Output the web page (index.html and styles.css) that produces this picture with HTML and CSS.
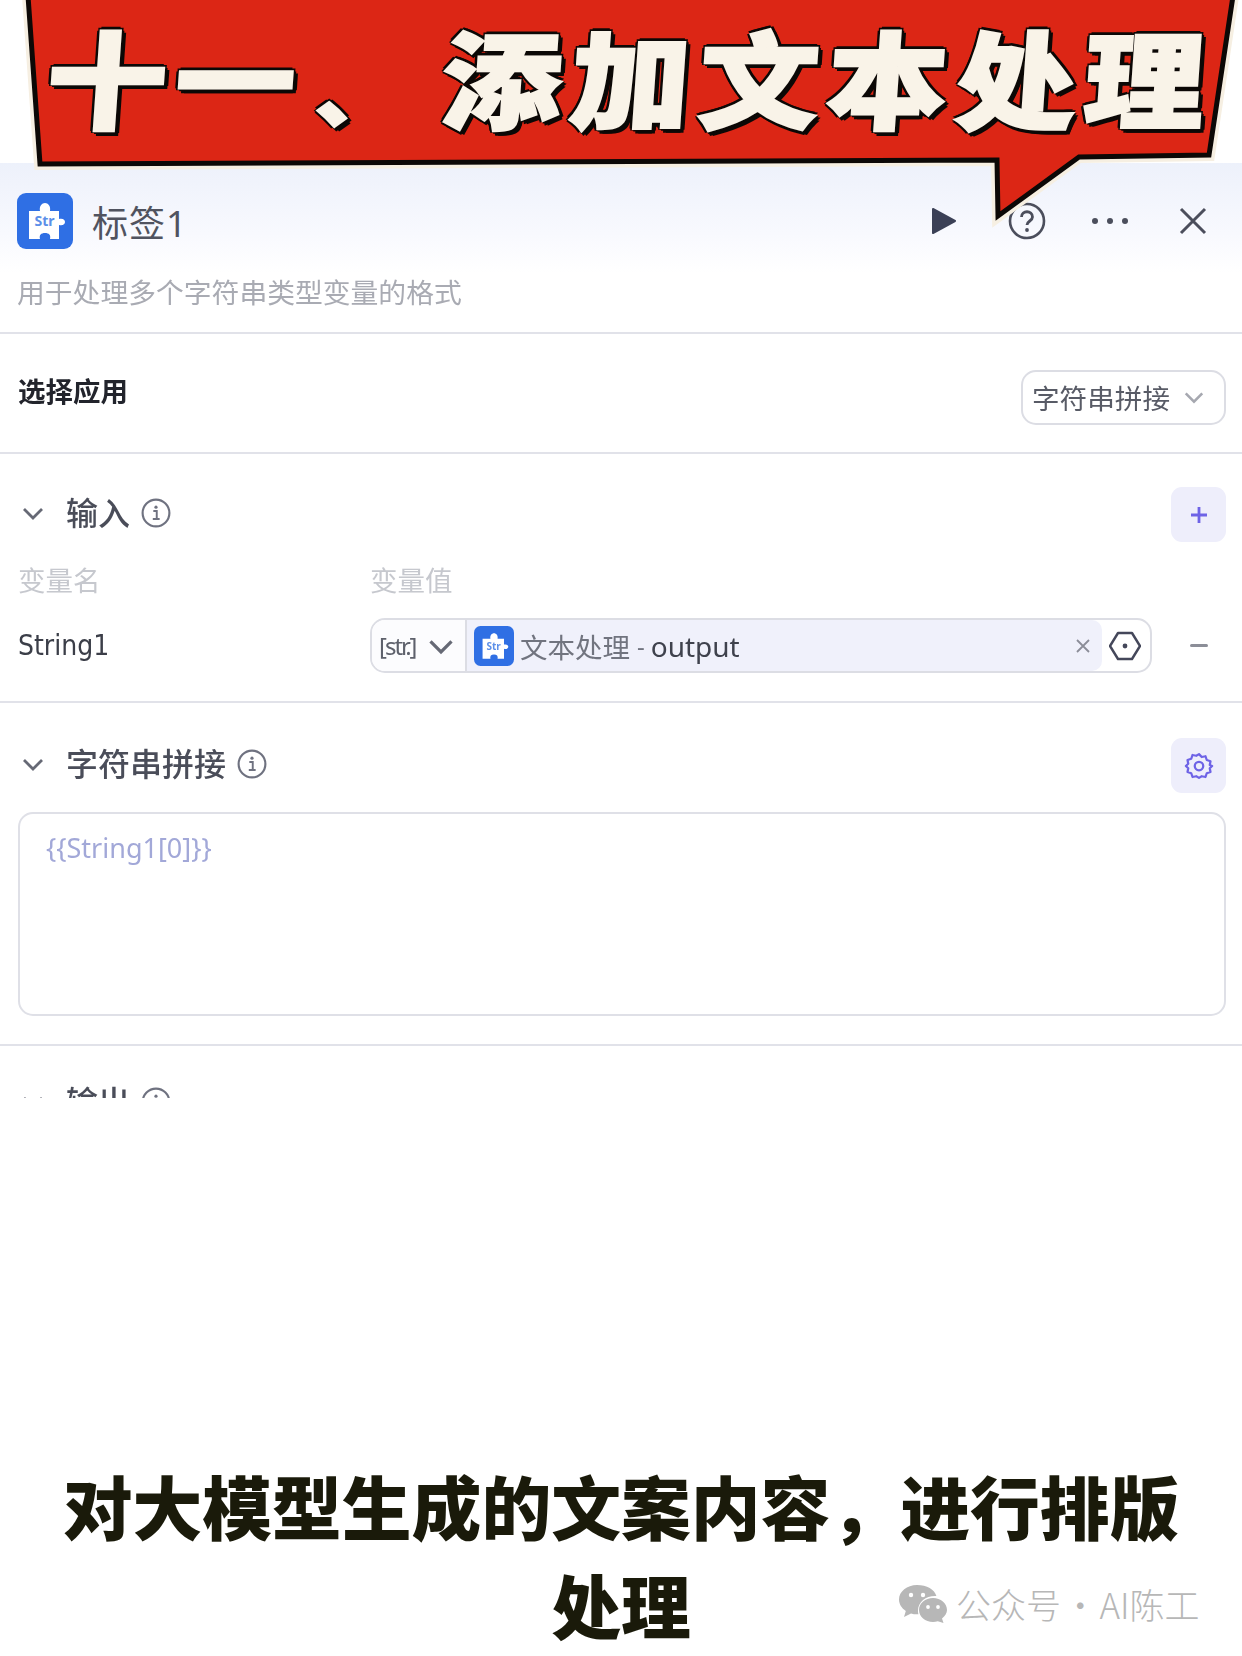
FILE: index.html
```html
<!DOCTYPE html>
<html lang="zh-CN">
<head>
<meta charset="utf-8">
<title>添加文本处理</title>
<link rel="stylesheet" href="styles.css">
</head>
<body>
<svg width="0" height="0" class="defs" aria-hidden="true">
  <symbol id="puzzle" viewBox="0 0 56 56">
    <rect width="56" height="56" rx="9" fill="#2f6fe4"/>
    <path d="M12 18h11c-1-5 2-8 5-8s6 3 5 8h9v8c4-1 6 1 6 3s-2 4-6 3v14h-9c1-4-1-6-5-6s-6 2-5 6H12z" fill="#fff"/>
    <text x="27.500" y="33" class="puzzle-text">Str</text>
  </symbol>
  <symbol id="info" viewBox="0 0 28 28">
    <circle cx="14" cy="14" r="12.500" fill="none" stroke="#6f7280" stroke-width="2"/>
    <circle cx="14" cy="8.600" r="1.500" fill="#6f7280"/>
    <path d="M11.500 12.200h3.200v7.200M11 19.600h6.400" fill="none" stroke="#6f7280" stroke-width="1.800"/>
  </symbol>
  <symbol id="chev" viewBox="0 0 24 24">
    <path d="M3 8l9 9 9-9" fill="none" stroke="currentColor" stroke-width="2.800"/>
  </symbol>
</svg>

<div class="banner">
  <svg class="banner-shape" width="1242" height="230" viewBox="0 0 1242 230" aria-hidden="true">
    <path class="banner-halo" d="M28 -4L40 164L997 160L998 216L1079 157L1209 155L1233 -4Z"/>
    <path class="banner-fill" d="M28 -4L40 164L997 160L998 216L1079 157L1209 155L1233 -4Z"/>
  </svg>
  <div class="banner-title">十一<span class="banner-mark">、</span>添加文本处理</div>
</div>

<main class="panel">
  <header class="head">
    <div class="head-row">
      <svg class="node-icon"><use href="#puzzle"/></svg>
      <h1 class="node-title">标签1</h1>
      <div class="actions">
        <span class="action"><svg width="26" height="28" viewBox="0 0 26 28"><path d="M2 2l22 12L2 26z" fill="#3b4056" stroke="#3b4056" stroke-width="2" stroke-linejoin="round"/></svg></span>
        <span class="action"><svg width="38" height="38" viewBox="0 0 38 38"><circle cx="19" cy="19" r="17" fill="none" stroke="#4b4e5c" stroke-width="2.600"/><path d="M13.500 15c0-7 11-7 11 0 0 4-5.500 4-5.500 8" fill="none" stroke="#4b4e5c" stroke-width="2.800"/><circle cx="19" cy="28" r="1.900" fill="#4b4e5c"/></svg></span>
        <span class="action"><svg width="38" height="8" viewBox="0 0 38 8"><circle cx="4" cy="4" r="3" fill="#4b4e5c"/><circle cx="19" cy="4" r="3" fill="#4b4e5c"/><circle cx="34" cy="4" r="3" fill="#4b4e5c"/></svg></span>
        <span class="action"><svg width="28" height="28" viewBox="0 0 28 28"><path d="M2 2l24 24M26 2L2 26" fill="none" stroke="#4b4e5c" stroke-width="3"/></svg></span>
      </div>
    </div>
    <p class="desc">用于处理多个字符串类型变量的格式</p>
  </header>

  <section class="section app">
    <div class="app-label">选择应用</div>
    <div class="select">
      <span>字符串拼接</span>
      <svg class="select-chev"><use href="#chev"/></svg>
    </div>
  </section>

  <section class="section inputs">
    <div class="sec-head">
      <svg class="sec-chev"><use href="#chev"/></svg>
      <span class="sec-title">输入</span>
      <svg class="info"><use href="#info"/></svg>
      <span class="sec-btn"><svg width="20" height="20" viewBox="0 0 20 20"><path d="M10 2v16M2 10h16" stroke="#6e63e6" stroke-width="2.800"/></svg></span>
    </div>
    <div class="var-grid">
      <span class="col-label">变量名</span>
      <span class="col-label">变量值</span>
    </div>
    <div class="var-grid var-row">
      <span class="var-name">String1</span>
      <div class="var-box">
        <div class="type">
          <span class="type-text">[str.]</span>
          <svg class="type-chev"><use href="#chev"/></svg>
        </div>
        <div class="tag">
          <svg class="tag-icon"><use href="#puzzle"/></svg>
          <span class="tag-src">文本处理</span>
          <span class="tag-dash">-</span>
          <span class="tag-out">output</span>
          <span class="tag-close"><svg width="14" height="14" viewBox="0 0 14 14"><path d="M1 1l12 12M13 1L1 13" stroke="#8b8d98" stroke-width="1.800"/></svg></span>
        </div>
        <span class="hex"><svg width="32" height="32" viewBox="0 0 32 32"><path d="M9 3h14l8 13-8 13H9L1 16z" fill="none" stroke="#44475a" stroke-width="2.400" stroke-linejoin="round"/><circle cx="16" cy="16" r="2.400" fill="#44475a"/></svg></span>
      </div>
      <span class="minus"></span>
    </div>
  </section>

  <section class="section concat">
    <div class="sec-head">
      <svg class="sec-chev"><use href="#chev"/></svg>
      <span class="sec-title">字符串拼接</span>
      <svg class="info"><use href="#info"/></svg>
      <span class="sec-btn"><svg width="30" height="30" viewBox="0 0 24 24" fill="none" stroke="#6e63e6" stroke-width="1.800" stroke-linejoin="round"><path d="M12 2.500l2.200 2.300 3-.6 1 3 3 1-.6 3L22.500 12l-1.900 1.800.6 3-3 1-1 3-3-.6L12 21.500l-2.200-1.300-3 .6-1-3-3-1 .6-3L1.500 12l1.900-1.800-.6-3 3-1 1-3 3 .6z"/><circle cx="12" cy="12" r="3.400"/></svg></span>
    </div>
    <div class="template">{{String1[0]}}</div>
  </section>

  <section class="section outputs">
    <div class="sec-head">
      <svg class="sec-chev"><use href="#chev"/></svg>
      <span class="sec-title">输出</span>
      <svg class="info"><use href="#info"/></svg>
    </div>
  </section>
</main>

<footer class="caption">对大模型生成的文案内容，进行排版<br>处理</footer>

<div class="mark">
  <svg width="48" height="38" viewBox="0 0 48 38"><path d="M18 0C8 0 0 6.500 0 14.500c0 4.600 2.700 8.700 6.800 11.400L5 32l7-3.600c2 .6 3.800.9 6 .9h1.500C19 28 19 26.500 19 25.500 19 17 26.800 11 36 11c.5 0 .9 0 1.400.1C35.700 4.600 27.800 0 18 0z" fill="#b7b7b7"/><path d="M48 25c0-6.800-6.300-12-14-12s-14 5.200-14 12 6.300 12 14 12c1.700 0 3.200-.3 4.800-.7L44.500 38 43 33.400C46 31 48 28.200 48 25z" fill="#b7b7b7"/><circle cx="12" cy="10" r="2.200" fill="#fff"/><circle cx="24" cy="10" r="2.200" fill="#fff"/><circle cx="29" cy="22" r="1.900" fill="#fff"/><circle cx="39" cy="22" r="1.900" fill="#fff"/></svg>
  <span>公众号 · AI陈工</span>
</div>
</body>
</html>
```

FILE: styles.css
```css
* { box-sizing: border-box; }
html, body { margin: 0; padding: 0; }
body {
  position: relative;
  width: 1242px;
  height: 1656px;
  overflow: hidden;
  background: #fff;
  font-family: "Noto Sans", "Noto Sans CJK SC", sans-serif;
  color: #3d404c;
}
.defs { position: absolute; }
.puzzle-text {
  font-family: "Noto Sans", sans-serif;
  font-size: 14px;
  font-weight: 700;
  fill: #5c8fe8;
  text-anchor: middle;
}

/* banner lies over the panel */
.banner { position: absolute; left: 0; top: 0; width: 1242px; height: 230px; z-index: 5; }
.banner-shape { display: block; }
.banner-halo { fill: none; stroke: #f6efe2; stroke-width: 12; stroke-linejoin: miter; }
.banner-fill { fill: #dc2615; stroke: #0c0806; stroke-width: 5; stroke-linejoin: miter; }
.banner-title {
  position: absolute;
  left: 47px;
  top: 0;
  white-space: nowrap;
  font-family: "Noto Sans CJK SC", sans-serif;
  font-size: 120px;
  line-height: 148px;
  font-weight: 900;
  letter-spacing: 8.500px;
  color: #f9f3e8;
  -webkit-text-stroke: 3px #f9f3e8;
  text-shadow:
    4px 0 0 #0c0806, -4px 0 0 #0c0806, 0 4px 0 #0c0806, 0 -4px 0 #0c0806,
    3px 3px 0 #0c0806, -3px 3px 0 #0c0806, 3px -3px 0 #0c0806, -3px -3px 0 #0c0806,
    5px 6px 0 #0c0806, 2px 6px 0 #0c0806, 6px 3px 0 #0c0806;
  transform: skewX(-4deg) scaleY(0.88);
}
.banner-mark { font-size: 84px; letter-spacing: 0; margin: 0 41px 0 13px; }

.panel {
  margin-top: 163px;
  height: 935px;
  overflow: hidden;
  filter: blur(0.5px);
}
.head {
  height: 171px;
  padding: 30px 8px 0 17px;
  border-bottom: 2px solid #e1e2e9;
  background: linear-gradient(#edf1fb 0, #f8f9fe 70px, #fff 110px);
}
.head-row { display: flex; align-items: center; height: 56px; }
.node-icon { width: 56px; height: 56px; flex: none; }
.node-title {
  margin: 6px 0 0 19px;
  font-size: 36px;
  line-height: 48px;
  letter-spacing: 1px;
  font-weight: 400;
  color: #50535f;
}
.actions { margin-left: auto; display: flex; }
.action { width: 83px; height: 56px; display: flex; align-items: center; justify-content: center; }
.desc {
  margin: 23px 0 0;
  font-size: 27.800px;
  line-height: 40px;
  color: #a9abb3;
}

.section { padding: 0 16px 0 18px; border-bottom: 2px solid #e1e2e9; }
.app { height: 120px; display: flex; align-items: flex-start; justify-content: space-between; padding-top: 36px; }
.app-label { margin-top: 2px; font-size: 27.500px; line-height: 40px; font-weight: 700; color: #22242c; }
.select {
  width: 205px;
  height: 55px;
  padding: 0 19px 2px 9px;
  display: flex;
  align-items: center;
  justify-content: space-between;
  border: 2px solid #dcdde4;
  border-radius: 15px;
  font-size: 27.600px;
  color: #585b66;
}
.select-chev { width: 22px; height: 22px; color: #a6a8b0; }

.inputs { height: 249px; padding-top: 33px; }
.concat { height: 343px; padding-top: 35px; }
.outputs { border-bottom: 0; padding-top: 30px; }
.sec-head { display: flex; align-items: center; height: 55px; }
.sec-chev { width: 24px; height: 24px; margin: -4px 21px 0 3px; color: #666975; flex: none; }
.sec-title { font-size: 32px; line-height: 44px; margin-top: -4px; font-weight: 500; color: #4a4d59; }
.info { width: 30px; height: 30px; margin: -4px 0 0 11px; flex: none; }
.sec-btn {
  margin-left: auto;
  width: 55px;
  height: 55px;
  display: flex;
  align-items: center;
  justify-content: center;
  border-radius: 11px;
  background: #eeeefb;
}

.var-grid { display: flex; align-items: center; }
.col-label { width: 352px; margin-top: 21px; font-size: 27.500px; line-height: 36px; color: #c6c8ce; }
.var-row { margin-top: 19px; }
.var-name {
  width: 352px;
  font-family: "DejaVu Sans", sans-serif;
  font-stretch: condensed;
  font-size: 28px;
  line-height: 55px;
  color: #3b3e48;
}
.var-box {
  width: 782px;
  height: 55px;
  display: flex;
  align-items: stretch;
  border: 2px solid #dcdde4;
  border-radius: 15px;
  padding-right: 2px;
}
.type {
  width: 95px;
  display: flex;
  align-items: center;
  padding-left: 7px;
  border-right: 2px solid #dcdde4;
  background: #fcfcfe;
  border-radius: 13px 0 0 13px;
}
.type-text { width: 43px; font-size: 24px; letter-spacing: -2px; color: #5e616c; }
.type-chev { width: 28px; height: 28px; margin-left: 5px; color: #666975; }
.tag {
  width: 635px;
  display: flex;
  align-items: center;
  padding: 0 12px 0 7px;
  background: #f0f1fb;
  border-radius: 0 10px 10px 0;
}
.tag-icon { width: 40px; height: 40px; flex: none; }
.tag-src { margin-left: 6px; font-size: 27.500px; color: #71747f; }
.tag-dash { margin: 0 6px 0 7px; font-size: 24px; color: #71747f; }
.tag-out { font-size: 28px; color: #3f424d; }
.tag-close { margin-left: auto; display: flex; }
.hex { flex: 1; display: flex; align-items: center; justify-content: center; }
.minus {
  margin-left: auto;
  width: 18px;
  height: 3px;
  margin-right: 18px;
  border-radius: 2px;
  background: #8c8e98;
}

.template {
  margin-top: 19px;
  height: 204px;
  padding: 14px 26px;
  border: 2px solid #dfe0e7;
  border-radius: 15px;
  font-size: 27px;
  line-height: 40px;
  color: #a2a8d8;
}

.caption {
  position: absolute;
  left: 0;
  right: 0;
  top: 1455px;
  text-align: center;
  font-family: "Noto Sans CJK SC", sans-serif;
  font-size: 69.800px;
  line-height: 99px;
  font-weight: 900;
  color: #1a1a0a;
}

.mark {
  position: absolute;
  left: 899px;
  top: 1582px;
  display: flex;
  align-items: center;
  gap: 9px;
  color: #b7b7b7;
  font-family: "Noto Sans CJK SC", sans-serif;
  font-size: 35px;
  font-weight: 300;
  line-height: 44px;
  word-spacing: -6px;
  white-space: nowrap;
}
```
